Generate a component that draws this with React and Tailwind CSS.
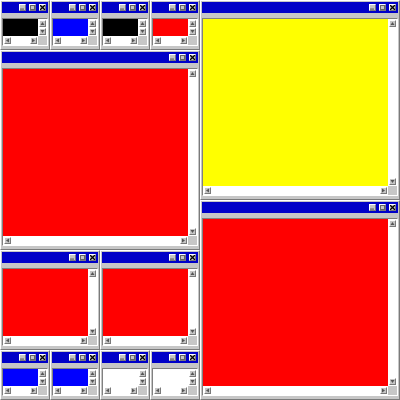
import React from 'react';

const sizes = {
  50: 'w-[50px] h-[50px]',
  100: 'w-[100px] h-[100px]',
  200: 'w-[200px] h-[200px]',
};

const raised = 'border border-t-white border-l-white border-r-[#7a7a7a] border-b-[#7a7a7a]';

function TitleButton({ kind }) {
  return (
    <div className={`w-[7px] h-[7px] bg-[#c6c6c6] ${raised} flex items-center justify-center`}>
      <svg width="5" height="5" viewBox="0 0 5 5" className="block">
        {kind === 'min' && <rect x="0" y="3.5" width="4" height="1.2" fill="#666" />}
        {kind === 'max' && <rect x="0.5" y="0.5" width="4" height="4" fill="none" stroke="#666" strokeWidth="1" />}
        {kind === 'close' && <path d="M0 0L5 5M5 0L0 5" stroke="#000" strokeWidth="1.3" />}
      </svg>
    </div>
  );
}

function Arrow({ dir }) {
  const pts = {
    up: '0.5,4 2.5,1 4.5,4',
    down: '0.5,1 2.5,4 4.5,1',
    left: '4,0.5 1,2.5 4,4.5',
    right: '1,0.5 4,2.5 1,4.5',
  }[dir];
  return (
    <div className={`w-[7px] h-[7px] bg-[#c6c6c6] ${raised} flex items-center justify-center shrink-0`}>
      <svg width="5" height="5" viewBox="0 0 5 5" className="block">
        <polygon points={pts} fill="#555" />
      </svg>
    </div>
  );
}

function Win({ size, color }) {
  return (
    <div className={`${sizes[size]} shrink-0 flex flex-col bg-[#c6c6c6] ${raised} p-px`}>
      <div className="h-[11px] shrink-0 bg-[#0000c8] flex items-center justify-end gap-[3px] pr-[2px]">
        <TitleButton kind="min" />
        <TitleButton kind="max" />
        <TitleButton kind="close" />
      </div>
      <div className="flex-1 min-h-0 mt-[5px] mb-[2px] border border-t-[#808080] border-l-[#808080] border-b-white border-r-white grid grid-cols-[1fr_9px] grid-rows-[1fr_9px] bg-white">
        <div className={color} />
        <div className="flex flex-col items-center justify-between py-px bg-white">
          <Arrow dir="up" />
          <Arrow dir="down" />
        </div>
        <div className="flex items-center justify-between px-px bg-white">
          <Arrow dir="left" />
          <Arrow dir="right" />
        </div>
        <div className="bg-[#c6c6c6]" />
      </div>
    </div>
  );
}

export default function App() {
  return (
    <div className="w-[400px] h-[400px] flex bg-[#c6c6c6] overflow-hidden">
      <div className="w-[200px] flex flex-col">
        <div className="flex">
          <Win size={50} color="bg-black" />
          <Win size={50} color="bg-[#0000ff]" />
          <Win size={50} color="bg-black" />
          <Win size={50} color="bg-[#ff0000]" />
        </div>
        <Win size={200} color="bg-[#ff0000]" />
        <div className="flex">
          <Win size={100} color="bg-[#ff0000]" />
          <Win size={100} color="bg-[#ff0000]" />
        </div>
        <div className="flex">
          <Win size={50} color="bg-[#0000ff]" />
          <Win size={50} color="bg-[#0000ff]" />
          <Win size={50} color="bg-white" />
          <Win size={50} color="bg-white" />
        </div>
      </div>
      <div className="w-[200px] flex flex-col">
        <Win size={200} color="bg-[#ffff00]" />
        <Win size={200} color="bg-[#ff0000]" />
      </div>
    </div>
  );
}
